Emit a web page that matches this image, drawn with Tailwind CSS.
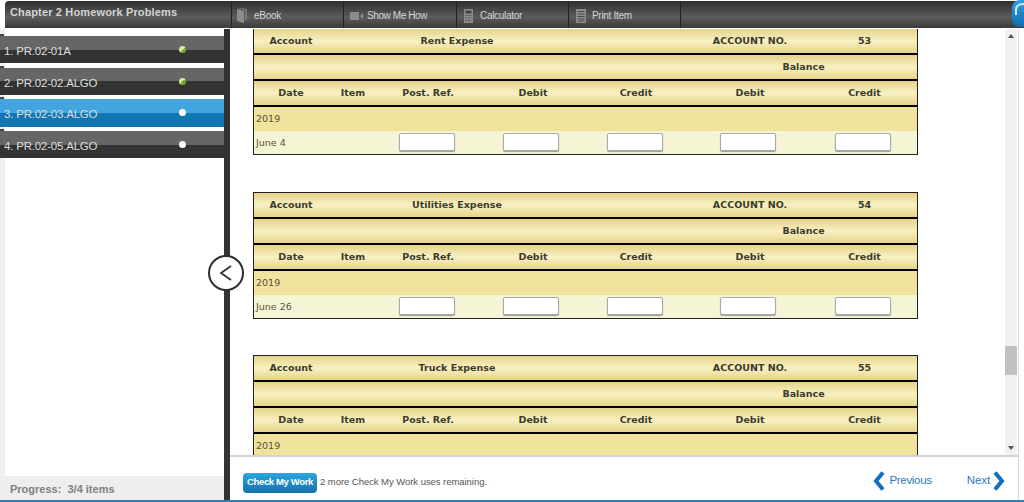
<!DOCTYPE html>
<html lang="en">
<head>
  <meta charset="UTF-8">
  <title>Chapter 2 Homework Problems</title>
  <script src="https://cdn.jsdelivr.net/npm/@tailwindcss/browser@4"></script>
</head>
<body class="w-[1024px] h-[502px] overflow-hidden bg-white font-['Liberation_Sans',sans-serif]">
  <!-- top bar -->
  <header class="relative h-[29px] pt-px pl-[5px] bg-white">
    <div class="flex h-[27px] rounded-tl-[4px] bg-gradient-to-b from-[#2e2e2e] via-[#5c5c5c] via-60% to-[#3a3a3a] text-[#d4d4d4]">
      <div class="w-[226px] shrink-0 pl-[5px] pt-[4px] text-[11px] leading-[14px] font-bold tracking-[0.15px]">Chapter 2 Homework Problems</div>
      <div class="w-[112px] shrink-0 flex items-center gap-[7px] border-l border-[#222] pl-[5px] pt-[2px] text-[10px] tracking-[-0.3px]">
        <svg width="10" height="15" viewBox="0 0 10 15"><path d="M0 1l7 2v12l-7-2z" fill="#8c8c8c"/><path d="M2 0l8 1v11l-2 1V2.500L2 1z" fill="#777"/></svg>
        <span>eBook</span>
      </div>
      <div class="w-[113px] shrink-0 flex items-center gap-[4px] border-l border-[#222] pl-[6px] pt-[2px] text-[10px] tracking-[-0.4px]">
        <svg width="13" height="8" viewBox="0 0 13 8"><rect width="9" height="8" fill="#8c8c8c"/><path d="M10 4l3-3v6z" fill="#8c8c8c"/></svg>
        <span>Show Me How</span>
      </div>
      <div class="w-[112px] shrink-0 flex items-center gap-[7px] border-l border-[#222] pl-[7px] pt-[2px] text-[10px] tracking-[-0.3px]">
        <svg width="9" height="14" viewBox="0 0 9 14"><rect width="9" height="14" fill="#8c8c8c"/><rect x="1.500" y="1.500" width="6" height="3" fill="#444"/><path d="M1.500 6.500h1.500M4 6.500h1.500M6.500 6.500h1M1.500 9h1.500M4 9h1.500M6.500 9h1M1.500 11.500h1.500M4 11.500h1.500M6.500 11.500h1" stroke="#444"/></svg>
        <span>Calculator</span>
      </div>
      <div class="w-[112px] shrink-0 flex items-center gap-[6px] border-l border-[#222] pl-[7px] pt-[2px] text-[10px] tracking-[-0.3px]">
        <svg width="10" height="14" viewBox="0 0 10 14"><rect width="10" height="14" fill="#8c8c8c"/><path d="M1.500 2.500h7M1.500 5h7M1.500 7.500h7M1.500 10h7M1.500 12h7" stroke="#4a4a4a"/></svg>
        <span>Print Item</span>
      </div>
      <div class="border-l border-[#222]"></div>
    </div>
    <!-- help badge, cut by the window edge -->
    <div class="absolute right-0 top-0 w-[12px] h-[27px] rounded-l-[8px] bg-gradient-to-b from-[#2f9fdc] to-[#0f6fae] overflow-hidden">
      <svg width="12" height="27" viewBox="0 0 12 27"><path d="M4 15V10c0-4 3-6 8-6" fill="none" stroke="#cfe9f7" stroke-width="2"/></svg>
    </div>
  </header>

  <div class="relative flex h-[471px]">
    <!-- problem list -->
    <aside class="w-[224px] shrink-0 flex flex-col bg-white">
      <div class="flex-1 border-l-[5px] border-[#efefef]">
        <div id="problems" class="-ml-[5px] pt-[7px]"></div>
      </div>
      <div class="h-[24px] bg-[#eeeeee] pl-[10px] pt-[6px] text-[11px] leading-[14px] font-bold text-[#808080]">Progress:&nbsp; 3/4 items</div>
    </aside>
    <div class="w-[6px] shrink-0 bg-[#333333]"></div>

    <!-- back circle on the divider -->
    <button class="absolute left-[208px] top-[226px] w-[36px] h-[36px] rounded-full bg-white border-2 border-[#2e2e2e] flex items-center justify-center">
      <svg width="14" height="18" viewBox="0 0 14 18"><path d="M12 2L2 9l10 7" fill="none" stroke="#333" stroke-width="1.800"/></svg>
    </button>

    <main class="w-[788px] shrink-0 flex flex-col">
      <div class="flex h-[426px]">
        <div class="flex-1 overflow-hidden pl-[23px]"><div id="ledgers" class="-mt-px"></div></div>
        <!-- scrollbar -->
        <div class="w-[12px] shrink-0 bg-[#f1f1f1] flex flex-col items-center mr-px">
          <div class="h-[14px] flex items-center justify-center"><div class="w-0 h-0 border-x-[3px] border-x-transparent border-b-[4px] border-b-[#555]"></div></div>
          <div class="h-[29px] w-full mt-[303px] bg-[#c1c1c1]"></div>
          <div class="mt-auto h-[14px] flex items-center justify-center"><div class="w-0 h-0 border-x-[3px] border-x-transparent border-t-[4px] border-t-[#555]"></div></div>
        </div>
      </div>
      <div class="h-[45px] border-t-2 border-[#d2d2d2] flex items-center pl-[13px] pr-[13px]">
        <button class="h-[20px] w-[74px] mt-[8px] rounded-[4px] bg-gradient-to-b from-[#2ea6de] to-[#1272ae] text-white text-[9.500px] font-bold tracking-[-0.35px]">Check My Work</button>
        <span class="ml-[3px] mt-[8px] text-[9.500px] text-[#555] tracking-[-0.05px]">2 more Check My Work uses remaining.</span>
        <a class="ml-auto mt-[5px] flex items-center gap-[4px] text-[11.500px] text-[#2c7cbc] tracking-[-0.3px]">
          <svg width="12" height="20" viewBox="0 0 12 20"><path d="M10 1.500L3 10l7 8.500" fill="none" stroke="#0f6fc0" stroke-width="4"/></svg>
          Previous
        </a>
        <a class="ml-[35px] mt-[5px] flex items-center gap-[3px] text-[11.500px] text-[#2c7cbc] tracking-[-0.1px]">
          Next
          <svg width="12" height="20" viewBox="0 0 12 20"><path d="M2 1.500L9 10l-7 8.500" fill="none" stroke="#0f6fc0" stroke-width="4"/></svg>
        </a>
      </div>
    </main>
    <div class="w-[6px] shrink-0 border-l border-[#d8d8d8]"></div>
  </div>
  <div class="h-[2px] bg-[#2f7fae]"></div>

  <script>
    const problems = [
      { name: '1. PR.02-01A', done: true, box: 'h-[27px] mb-[5px]' },
      { name: '2. PR.02-02.ALGO', done: true, box: 'h-[27px] mb-[4px]' },
      { name: '3. PR.02-03.ALGO', done: false, active: true, box: 'h-[28px] mb-[4px]' },
      { name: '4. PR.02-05.ALGO', done: false, box: 'h-[27px]' }
    ];

    document.getElementById('problems').innerHTML = problems.map(p => `
      <div class="relative ${p.box} pl-[4px] pt-[6px] text-[11.500px] leading-[18px] tracking-[-0.2px] text-[#dddddd] ${p.active ? 'bg-gradient-to-b from-[#42a5e0] from-50% to-[#1475b3] to-50%' : 'bg-gradient-to-b from-[#666666] from-50% to-[#333333] to-50%'}">
        <div class="absolute left-0 -top-[2px] w-[4px] h-[2px] bg-[#444]"></div>
        ${p.name}
        <div class="absolute left-[179px] top-[10px] w-[7px] h-[7px] rounded-full ${p.done ? 'bg-gradient-to-br from-[#d8e6a8] from-50% to-[#7fa82e] to-50%' : 'bg-white'}"></div>
      </div>
    `).join('');

    const ledgers = [
      { title: 'Rent Expense', no: 53, date: 'June 4' },
      { title: 'Utilities Expense', no: 54, date: 'June 26' },
      { title: 'Truck Expense', no: 55, date: '' }
    ];

    const head = 'h-[24px] leading-[24px] text-center font-bold text-[#3d3a2a] bg-gradient-to-b from-[#e6d387] via-[#f8f1c4] to-[#e6d487]';
    const cols = ['Date', 'Item', 'Post. Ref.', 'Debit', 'Credit', 'Debit'];
    const input = '<input class="w-[56px] h-[18px] mt-[2px] bg-white rounded-[2px] border border-[#aaaaaa] shadow-[0_1px_1px_#999]">';
    const field = `<div class="flex justify-center pr-[3px]">${input}</div>`;
    const debitField = `<div class="flex justify-center pr-[5px]">${input}</div>`;
    const lastField = `<div class="flex justify-center pr-[7px]">${input}</div>`;

    document.getElementById('ledgers').innerHTML = ledgers.map(l => `
      <div class="w-[665px] mb-[36.500px] border border-[#222] text-[9.500px] font-['DejaVu_Sans',sans-serif] grid grid-cols-[74px_50px_100px_110px_96px_132px_101px] bg-black gap-y-[2px]">
        <div class="${head}">Account</div>
        <div class="${head} col-span-3 pr-[2px]">${l.title}</div>
        <div class="${head}"></div>
        <div class="${head}">ACCOUNT NO.</div>
        <div class="${head} pr-[4px]">${l.no}</div>
        <div class="${head} col-span-5"></div>
        <div class="${head} col-span-2 pl-[6px]">Balance</div>
        ${cols.map(c => `<div class="${head}">${c}</div>`).join('')}
        <div class="${head} pr-[4px]">Credit</div>
        <div class="col-span-7 h-[24px] leading-[24px] pl-[2px] text-[#5a5236] bg-[#efe39e]">2019</div>
        <div class="col-span-7 -mt-[2px] h-[23px] grid grid-cols-[74px_50px_100px_110px_96px_132px_101px] bg-[#f5f5d6] text-[#5a5236]">
          <div class="pl-[2px] leading-[23px]">${l.date}</div>
          <div></div>
          ${field}${debitField}${field}${debitField}${lastField}
        </div>
      </div>
    `).join('');
  </script>
</body>
</html>
